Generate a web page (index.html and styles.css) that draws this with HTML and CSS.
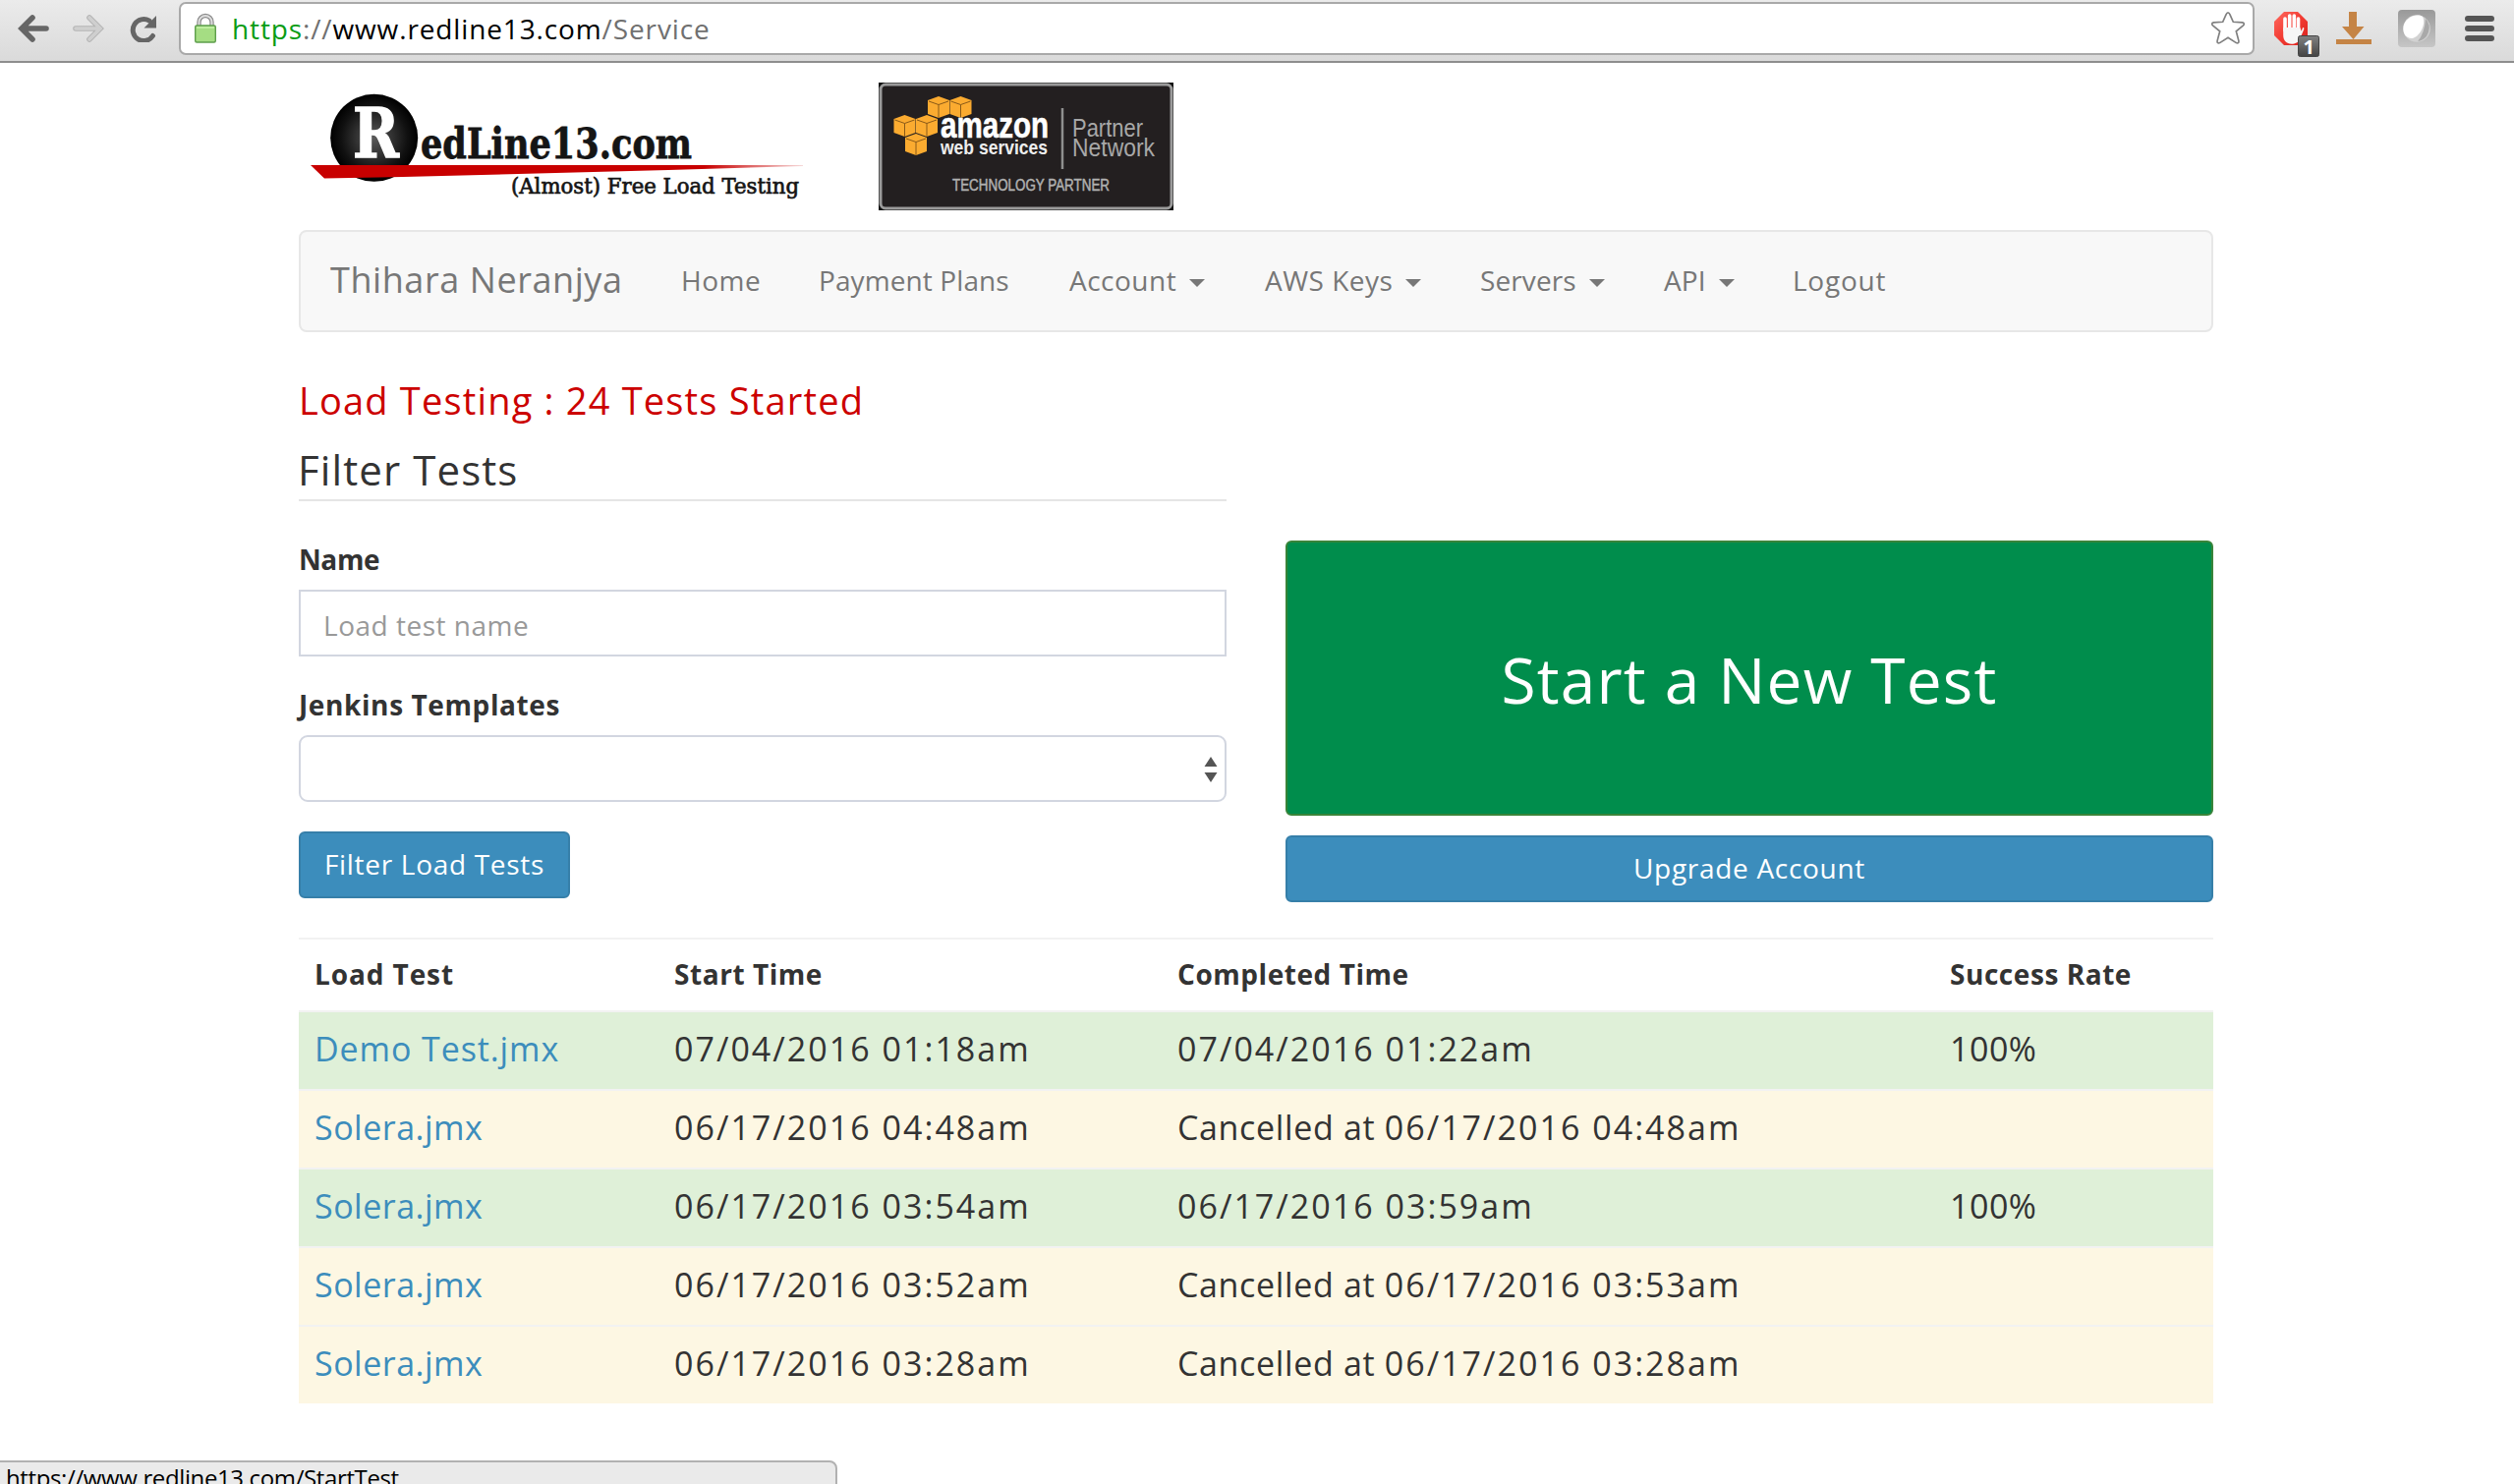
FILE: index.html
```html
<!DOCTYPE html>
<html lang="en">
<head>
<meta charset="utf-8">
<title>RedLine13</title>
<link rel="stylesheet" href="styles.css">
</head>
<body>
<div class="toolbar">
  <div class="history">
    <svg class="arrow" viewBox="0 0 32 28"><path d="M15 3 4 14l11 11M5 14h24" fill="none" stroke="#666" stroke-width="5.6" stroke-linecap="round" stroke-linejoin="miter"/></svg>
    <svg class="arrow" viewBox="0 0 32 28"><path d="M17 3l11 11-11 11M27 14H3" fill="none" stroke="#b4b4b4" stroke-width="5.6" stroke-linecap="round"/><path d="M17 3l11 11-11 11M27 14H3" fill="none" stroke="#cfcfcf" stroke-width="3.6" stroke-linecap="round"/></svg>
    <svg class="reload" viewBox="0 0 30 28"><path d="M25.500 21.500A11 11 0 1 1 22 6.200" fill="none" stroke="#666" stroke-width="5" stroke-linecap="round"/><path d="M29 1v12.500H16.500z" fill="#666"/></svg>
  </div>
  <div class="address">
    <svg class="lock" viewBox="0 0 24 32"><path d="M5.500 14V9.500a6.500 6.500 0 0 1 13 0V14" fill="none" stroke="#8c8c8c" stroke-width="4.400"/><path d="M5.500 14V9.500a6.500 6.500 0 0 1 13 0V14" fill="none" stroke="#dedede" stroke-width="2"/><rect x="1.700" y="13" width="20.600" height="17" rx="1.500" fill="#a5dd83" stroke="#5e9e4c" stroke-width="1.400"/><path d="M3 15h18" stroke="#c6f3a8" stroke-width="1.500"/></svg>
    <div class="url"><span class="scheme">https</span>://<span class="host">www.redline13.com</span>/Service</div>
    <svg class="star" viewBox="0 0 36 36"><path d="M18 1.800c1 0 1.500.8 2 2l3.300 7.500 9.200.6c2 .2 2.300 1.700 1 2.900l-7.200 6 2.600 9.800c.4 2-.9 2.900-2.500 2L18 27.300l-8.400 5.300c-1.600.9-2.900 0-2.500-2l2.600-9.800-7.200-6c-1.300-1.200-1-2.700 1-2.900l9.200-.6L16 3.800c.5-1.200 1-2 2-2z" fill="none" stroke="#808080" stroke-width="1.700"/></svg>
  </div>
  <div class="extensions">
    <svg class="block" viewBox="0 0 48 48"><defs><linearGradient id="red" x2="1" y2="1"><stop offset="0" stop-color="#ff6a60"/><stop offset=".5" stop-color="#f23b32"/><stop offset="1" stop-color="#d7201c"/></linearGradient><linearGradient id="tag" x2="0" y2="1"><stop offset="0" stop-color="#818181"/><stop offset="1" stop-color="#444"/></linearGradient></defs><path d="M10 2h14l10 10v14L24 36H10L0 26V12z" fill="url(#red)"/><path d="M11 9v12M15.700 6v14M20.300 6v14M24.500 9v14" stroke="#fff" stroke-width="3.600" stroke-linecap="round"/><path d="M9.200 18h17.100l1.400 3.800L29 18.300c1-.9 1.600.1 1.200 1.700l-4 9.500c-1.700 4-5 5.200-8.500 5.200-5.200 0-8.500-3.700-8.500-9z" fill="#f6f6f6"/><rect x="24.500" y="26.500" width="21" height="21" rx="2" fill="url(#tag)" stroke="#444"/><text x="29.500" y="44.500" class="count">1</text></svg>
    <svg class="download" viewBox="0 0 36 36"><path d="M13 2h8v15h7.500L17.500 30 6 17h7zM0 30h36v5H0z" fill="#c58445"/></svg>
    <svg class="globe" viewBox="0 0 38 38"><defs><linearGradient id="tile" x2="0" y2="1"><stop offset="0" stop-color="#999"/><stop offset="1" stop-color="#c6c6c6"/></linearGradient></defs><rect width="38" height="38" rx="4" fill="url(#tile)"/><circle cx="19" cy="19" r="13.800" fill="#d2d2d2"/><path d="M20 32A13.800 13.800 0 0 0 28 9q-1 15-8 23z" fill="#a9a9a9"/><path d="M25 7c4 7-3 21-11 22C8 29 4.500 24 5.500 17 7 8 19 3 25 7z" fill="#fff"/></svg>
    <svg class="menu" viewBox="0 0 30 28"><path d="M3 4h24M3 14h24M3 24h24" stroke="#555" stroke-width="6" stroke-linecap="round"/></svg>
  </div>
</div>

<main class="container">
  <header class="brands">
    <svg class="logo" viewBox="304 64 590 170">
      <defs>
        <radialGradient id="ball"><stop offset="0" stop-color="#5a5a5a"/><stop offset=".75" stop-color="#111"/><stop offset="1" stop-color="#000"/></radialGradient>
        <linearGradient id="fade" x1="0" x2="1"><stop offset=".8" stop-color="#c80000"/><stop offset="1" stop-color="#c80000" stop-opacity=".15"/></linearGradient>
      </defs>
      <circle cx="380.700" cy="140.300" r="44.500" fill="url(#ball)"/>
      <text x="359" y="159.500" class="initial" textLength="47" lengthAdjust="spacingAndGlyphs">R</text>
      <path d="M316 168h501v1L680 173l-270 7-80 1.500z" fill="url(#fade)"/>
      <text x="428" y="160.500" class="wordmark" textLength="276" lengthAdjust="spacingAndGlyphs">edLine13.com</text>
      <text x="520" y="197" class="tagline" textLength="293" lengthAdjust="spacingAndGlyphs">(Almost) Free Load Testing</text>
    </svg>
    <svg class="badge" viewBox="0 0 300 130">
      <defs>
        <g id="cube"><path d="M0 4 11 0l11 4v14l-11 4-11-4z" fill="#fbab30"/><path d="M1 5l10 3.500L21 5M11 8.500V22" fill="none" stroke="#8a5a18" stroke-width="1"/></g>
      </defs>
      <path d="M0 0h300v130H0z" fill="#111"/>
      <rect x="2" y="2" width="296" height="126" rx="5" fill="#231f20" stroke="#9b9b9b" stroke-width="3"/>
      <use href="#cube" x="50" y="14"/><use href="#cube" x="72.500" y="14"/>
      <use href="#cube" x="15.500" y="33"/><use href="#cube" x="38" y="33"/>
      <use href="#cube" x="27" y="52"/>
      <text x="63" y="56" class="aws-name" textLength="110" lengthAdjust="spacingAndGlyphs">amazon</text>
      <text x="63" y="73" class="aws-sub" textLength="109" lengthAdjust="spacingAndGlyphs">web services</text>
      <path d="M187 26v62" stroke="#8f8f8f" stroke-width="2.500"/>
      <text x="197" y="55" class="aws-net" textLength="72" lengthAdjust="spacingAndGlyphs">Partner</text>
      <text x="197" y="75" class="aws-net" textLength="84" lengthAdjust="spacingAndGlyphs">Network</text>
      <text x="75" y="110" class="aws-tier" textLength="160" lengthAdjust="spacingAndGlyphs">TECHNOLOGY PARTNER</text>
    </svg>
  </header>

  <nav class="navbar">
    <a class="user">Thihara Neranjya</a>
    <a class="link">Home</a>
    <a class="link tight">Payment Plans</a>
    <a class="link">Account<i class="caret"></i></a>
    <a class="link">AWS Keys<i class="caret"></i></a>
    <a class="link tight">Servers<i class="caret"></i></a>
    <a class="link tight">API<i class="caret"></i></a>
    <a class="link wide">Logout</a>
  </nav>

  <h1 class="title">Load Testing : 24 Tests Started</h1>

  <div class="columns">
    <form class="filter">
      <h2 class="heading">Filter Tests</h2>
      <label class="label name">Name</label>
      <div class="field">Load test name</div>
      <label class="label">Jenkins Templates</label>
      <div class="select"><svg class="stepper" viewBox="0 0 14 26"><path d="M7 0l6.500 10H.5zM7 26l6.500-10H.5z" fill="#555"/></svg></div>
      <button type="button" class="button submit">Filter Load Tests</button>
    </form>
    <div class="actions">
      <button type="button" class="start">Start a New Test</button>
      <button type="button" class="button">Upgrade Account</button>
    </div>
  </div>

  <table class="tests">
    <colgroup><col class="c1"><col class="c2"><col class="c3"><col class="c4"></colgroup>
    <thead><tr><th class="loose">Load Test</th><th>Start Time</th><th>Completed Time</th><th>Success Rate</th></tr></thead>
    <tbody>
      <tr class="passed"><td><a class="demo">Demo Test.jmx</a></td><td class="date">07/04/2016 01:18am</td><td class="date">07/04/2016 01:22am</td><td>100%</td></tr>
      <tr class="cancelled"><td><a>Solera.jmx</a></td><td class="date">06/17/2016 04:48am</td><td class="note">Cancelled at <span class="date">06/17/2016 04:48am</span></td><td></td></tr>
      <tr class="passed"><td><a>Solera.jmx</a></td><td class="date">06/17/2016 03:54am</td><td class="date">06/17/2016 03:59am</td><td>100%</td></tr>
      <tr class="cancelled"><td><a>Solera.jmx</a></td><td class="date">06/17/2016 03:52am</td><td class="note">Cancelled at <span class="date">06/17/2016 03:53am</span></td><td></td></tr>
      <tr class="cancelled"><td><a>Solera.jmx</a></td><td class="date">06/17/2016 03:28am</td><td class="note">Cancelled at <span class="date">06/17/2016 03:28am</span></td><td></td></tr>
    </tbody>
  </table>
</main>
<div class="status">https://www.redline13.com/StartTest</div>
</body>
</html>
```
FILE: styles.css
```css
* { box-sizing: border-box; }
html, body { height: 1510px; overflow: hidden; }
body {
  position: relative;
  margin: 0;
  background: #fff;
  color: #333;
  font-family: "Open Sans", sans-serif;
  font-size: 28px;
}
svg { display: block; flex: none; }

/* Browser toolbar */
.toolbar {
  display: flex;
  height: 64px;
  background: linear-gradient(#ebebeb, #dadada);
  border-bottom: 2px solid #8e8e8e;
}
.history { display: flex; gap: 24px; width: 182px; padding: 15px 0 0 18px; }
.arrow { width: 32px; height: 28px; }
.history .reload { width: 30px; height: 28px; }
.address {
  display: flex;
  align-items: center;
  width: 2112px;
  height: 54px;
  margin-top: 2px;
  padding: 0 7px 0 13px;
  background: #fff;
  border: 2px solid #a9a9a9;
  border-radius: 7px;
}
.lock { width: 24px; height: 32px; }
.url { flex: 1; padding-left: 15px; line-height: 50px; letter-spacing: .87px; color: #707070; }
.scheme { color: #0a9c14; }
.host { color: #000; }
.star { width: 36px; height: 36px; }
.extensions { display: flex; padding-left: 20px; }
.block { width: 48px; height: 48px; margin-top: 10px; overflow: visible; }
.count { font: bold 20px "Open Sans", sans-serif; fill: #fff; }
.download { width: 36px; height: 36px; margin: 10px 0 0 15px; }
.globe { width: 38px; height: 38px; margin: 10px 0 0 27px; }
.menu { width: 30px; height: 28px; margin: 15px 0 0 30px; }

/* Page */
.container { width: 1948px; margin: 0 0 0 304px; }
.brands { display: flex; height: 170px; }
.logo { width: 590px; height: 170px; }
.badge { width: 300px; height: 130px; margin-top: 20px; }
.initial { font: bold 70px "DejaVu Serif", serif; fill: #fff; stroke: #fff; stroke-width: 1.5px; }
.wordmark { font: bold 43px "DejaVu Serif", serif; fill: #151515; stroke: #151515; stroke-width: .8px; }
.tagline { font: 22px "DejaVu Serif", serif; fill: #151515; stroke: #151515; stroke-width: .7px; }
.aws-name { font: bold 37px "Liberation Sans", sans-serif; fill: #fff; stroke: #fff; stroke-width: .6px; }
.aws-sub { font: bold 21px "Liberation Sans", sans-serif; fill: #eee; }
.aws-net { font: 25px "Liberation Sans", sans-serif; fill: #a8a8a8; }
.aws-tier { font: 16px "Liberation Sans", sans-serif; fill: #b0b0b0; stroke: #b0b0b0; stroke-width: .5px; }

.navbar {
  display: grid;
  grid-template-columns: 357px 140px 255px 199px 219px 187px 131px auto;
  height: 104px;
  padding-left: 30px;
  background: #f8f8f8;
  border: 2px solid #e7e7e7;
  border-radius: 8px;
  color: #777;
}
.user { font-size: 36px; line-height: 97px; letter-spacing: .57px; }
.link { display: flex; line-height: 98px; letter-spacing: .5px; }
.tight { letter-spacing: .1px; }
.wide { letter-spacing: .75px; }
.caret {
  margin: 48px 0 0 13px;
  border: 8px solid transparent;
  border-top-color: #777;
  border-bottom: 0;
  align-self: flex-start;
}

.title { margin: 47px 0 0; font-size: 38px; line-height: 44px; font-weight: 400; letter-spacing: 1.18px; color: #c00; }
.columns { display: grid; grid-template-columns: 944px 944px; gap: 60px; height: 489px; }
.heading {
  margin: 26px 0 0;
  padding-bottom: 7px;
  border-bottom: 2px solid #e5e5e5;
  font-size: 42px;
  line-height: 46px;
  font-weight: 400;
  letter-spacing: 1.1px;
  text-indent: -1px;
}
.label { display: block; margin: 29px 0 11px; font-weight: 700; line-height: 40px; letter-spacing: .6px; }
.label.name { margin-top: 39px; letter-spacing: -.4px; }
.field, .select {
  display: flex;
  height: 68px;
  border: 2px solid #d2d6e0;
}
.field { padding: 2px 0 0 23px; line-height: 64px; letter-spacing: .51px; color: #999; }
.select { align-items: center; justify-content: flex-end; padding: 2px 7px 0; border-radius: 9px; }
.stepper { width: 14px; height: 26px; }
.button {
  display: block;
  width: 100%;
  height: 68px;
  padding: 0 0 2px;
  background: #3c8dbc;
  border: 2px solid #367fa9;
  border-radius: 6px;
  color: #fff;
  font: inherit;
  letter-spacing: .7px;
}
.submit { width: 276px; margin-top: 30px; }
.actions { display: flex; flex-direction: column; gap: 20px; padding-top: 121px; }
.start {
  height: 280px;
  padding: 3px 0 0;
  background: #008d4c;
  border: 2px solid #398439;
  border-radius: 6px;
  color: #fff;
  font: inherit;
  font-size: 64px;
  letter-spacing: 1.18px;
}

.tests { width: 1948px; margin-top: 36px; table-layout: fixed; border-collapse: separate; border-spacing: 0; }
.c1 { width: 366px; }
.c2 { width: 512px; }
.c3 { width: 786px; }
.c4 { width: 284px; }
th, td { padding: 0 0 0 16px; border-top: 2px solid #f2f2f2; text-align: left; }
th { height: 74px; padding-bottom: 2px; line-height: 40px; font-weight: 700; letter-spacing: .55px; }
.loose { letter-spacing: .9px; }
td { height: 80px; padding-bottom: 4px; font-size: 34px; line-height: 48px; letter-spacing: .5px; }
.date { letter-spacing: 2.02px; }
.note { letter-spacing: .65px; }
.passed { background: #dff0d8; }
.cancelled { background: #fdf7e3; }
td a { color: #3c8dbc; }
.demo { letter-spacing: .9px; }

/* Link target preview over the page's lower edge */
.status {
  position: absolute;
  left: -2px;
  top: 1486px;
  width: 854px;
  height: 40px;
  padding-left: 6px;
  background: #eaeaea;
  border: 2px solid #b1b1b1;
  border-radius: 0 8px 0 0;
  color: #000;
  font-size: 24px;
  line-height: 32px;
  letter-spacing: -.38px;
}
```
